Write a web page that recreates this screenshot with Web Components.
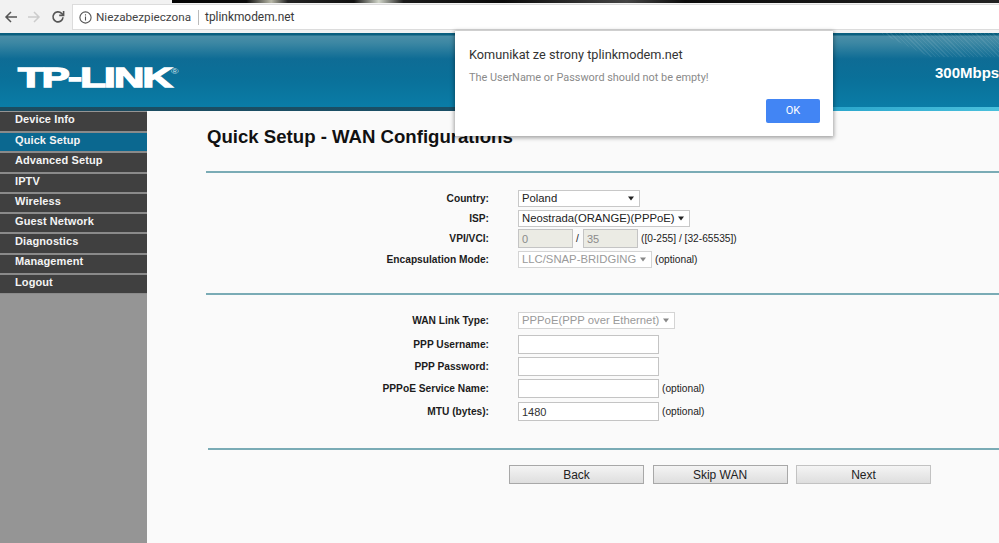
<!DOCTYPE html>
<html lang="pl"><head><meta charset="utf-8"><title>TP-LINK</title>
<style>
html,body{margin:0;padding:0;width:999px;height:543px;overflow:hidden;background:#fafafa;font-family:"Liberation Sans",Arial,sans-serif}
body{display:flex;flex-direction:column;position:relative}
router-page{flex:1;min-height:0}
</style></head><body>
<browser-bar url="tplinkmodem.net" status="Niezabezpieczona"></browser-bar>
<router-banner speed="300Mbps"></router-banner>
<router-page>
  <side-menu slot="menu">
    <menu-item>Device Info</menu-item>
    <menu-item active>Quick Setup</menu-item>
    <menu-item>Advanced Setup</menu-item>
    <menu-item>IPTV</menu-item>
    <menu-item>Wireless</menu-item>
    <menu-item>Guest Network</menu-item>
    <menu-item>Diagnostics</menu-item>
    <menu-item>Management</menu-item>
    <menu-item>Logout</menu-item>
  </side-menu>
  <wan-title>Quick Setup - WAN Configurations</wan-title>
  <section-rule style="margin-top:24px"></section-rule>
  <form-section style="margin-top:15px">
    <form-row label="Country:" h="20"><select-box w="122">Poland</select-box></form-row>
    <form-row label="ISP:" h="20"><select-box w="172">Neostrada(ORANGE)(PPPoE)</select-box></form-row>
    <form-row label="VPI/VCI:" h="21"><text-box w="55" h="19" disabled>0</text-box><span style="margin:0 5px 0 3px;width:2px">/</span><text-box w="55" h="19" disabled>35</text-box><span style="margin-left:3px">([0-255] / [32-65535])</span></form-row>
    <form-row label="Encapsulation Mode:" h="20"><select-box w="134" disabled>LLC/SNAP-BRIDGING</select-box><span style="margin-left:3px">(optional)</span></form-row>
  </form-section>
  <section-rule style="margin-top:24px"></section-rule>
  <form-section style="margin-top:13px">
    <form-row label="WAN Link Type:" h="24"><select-box w="157" disabled>PPPoE(PPP over Ethernet)</select-box></form-row>
    <form-row label="PPP Username:" h="25"><text-box w="141" h="19"></text-box></form-row>
    <form-row label="PPP Password:" h="19"><text-box w="141" h="19"></text-box></form-row>
    <form-row label="PPPoE Service Name:" h="25"><text-box w="141" h="19"></text-box><span style="margin-left:3px">(optional)</span></form-row>
    <form-row label="MTU (bytes):" h="21"><text-box w="141" h="19">1480</text-box><span style="margin-left:3px">(optional)</span></form-row>
  </form-section>
  <section-rule style="margin-top:26px;margin-left:2px"></section-rule>
  <button-row>
    <push-button>Back</push-button>
    <push-button>Skip WAN</push-button>
    <push-button focused>Next</push-button>
  </button-row>
</router-page>
<alert-dialog heading="Komunikat ze strony tplinkmodem.net" ok="OK">The UserName or Password should not be empty!</alert-dialog>
<script>
function def(name, html){
  customElements.define(name, class extends HTMLElement{
    constructor(){super();this.attachShadow({mode:'open'});}
    connectedCallback(){
      this.shadowRoot.innerHTML = typeof html==='function'?html(this):html;
    }
  });
}
def('browser-bar', el=>`<style>
:host{display:block;height:33px;background:#f2f2f2;box-sizing:border-box;position:relative;font-family:Roboto,"Open Sans",sans-serif}
.strip{height:3px;margin-left:172px;background:linear-gradient(90deg,#050505 0,#0a0a0a 9%,#b8b8a8 12%,#222 14%,#111 22%,#d0d4c8 25%,#1a1a1a 28%,#0a0a0a 40%,#444 55%,#0c0c0c 62%,#222 100%)}
.row{display:flex;align-items:center;height:24px;margin:2px 0 0 -1px}
svg{display:block;flex:none}
.nav{width:23.5px;height:24px;display:flex;align-items:center;justify-content:center}
.addr{flex:1;margin-left:3.5px;height:24px;background:#fff;box-shadow:0 0 0 1px #dcdcdc;display:flex;align-items:center;padding-left:6px;font-size:11.7px;color:#444;white-space:nowrap}
.sep{width:1px;height:15px;background:#bbb;margin:0 6px 0 7px}
.url{color:#3a3a3a;font-size:11.9px}
.st{margin-left:4px}
</style>
<div class="strip"></div>
<div class="row">
<span class="nav"><svg width="16" height="16" viewBox="0 0 16 16" fill="none" stroke="#555" stroke-width="1.5"><path d="M14 8H3M8 3L3 8l5 5"/></svg></span>
<span class="nav"><svg width="16" height="16" viewBox="0 0 16 16" fill="none" stroke="#ccc" stroke-width="1.5"><path d="M2 8h11M8 3l5 5-5 5"/></svg></span>
<span class="nav"><svg width="16" height="16" viewBox="0 0 16 16" fill="none" stroke="#555" stroke-width="1.6"><path d="M13 8.2A5 5 0 1 1 11.6 4.4L13.4 6"/><path d="M13.6 2v4.4H9.2" fill="none"/></svg></span>
<div class="addr"><svg width="13" height="13" viewBox="0 0 13 13" fill="none" stroke="#555" stroke-width="1.1"><circle cx="6.5" cy="6.5" r="5.6"/><path d="M6.5 5.6v4M6.5 3.2v1.2"/></svg>
<span class="st">${el.getAttribute('status')}</span><span class="sep"></span><span class="url">${el.getAttribute('url')}</span></div>
</div>`);
def('router-banner', el=>`<style>
:host{display:block;height:78px;position:relative;overflow:hidden;background:linear-gradient(180deg,#0a5f7f 0,#0a5f7f 2px,#4a8ea8 3px,#3c87a3 10px,#0e6c95 26px,#0a7099 45px,#0a7ca6 73px);box-sizing:border-box}
.hatch{position:absolute;inset:0 0 auto 880px;height:24px;background:repeating-linear-gradient(45deg,rgba(255,255,255,.08) 0 1px,transparent 1px 3px);clip-path:polygon(0 0,100% 0,100% 100%,50px 100%)}
.band{position:absolute;left:0;right:0;bottom:0;height:4px;background:linear-gradient(90deg,#1c4c60 0,#1a4f66 45%,#2aa6cc 83%,#4ac0dc 100%)}
.row{position:absolute;inset:0 0 4px 0;display:flex;align-items:center;padding:15px 0 0 18px;box-sizing:border-box}
.logo{font:bold 28.5px "Liberation Sans",Arial,sans-serif;color:#fff;-webkit-text-stroke:1.4px #fff;transform:scaleX(1.47);transform-origin:left center;letter-spacing:-1.2px;white-space:nowrap;line-height:1}
.logo sup{font:normal 7px "Liberation Sans",sans-serif;-webkit-text-stroke:0;vertical-align:13px;color:#cfe3ea;letter-spacing:0}
.speed{position:absolute;left:935px;top:31px;font:bold 15px "Liberation Sans",Arial,sans-serif;color:#fff;white-space:nowrap}
</style><div class="hatch"></div><div class="band"></div><div class="row"><span class="logo">TP-LINK<sup>®</sup></span></div><span class="speed">${el.getAttribute('speed')}</span>`);
def('router-page', `<style>
:host{display:grid;grid-template-columns:147px 1fr;height:100%;background:#fafafa}
.side{background:#959595;padding-top:1px;min-height:0}
.main{min-width:0;padding-left:59px;display:block;box-sizing:border-box}
</style><div class="side"><slot name="menu"></slot></div><div class="main"><slot></slot></div>`);
def('side-menu', `<style>:host{display:grid;grid-template-rows:repeat(9,1fr);height:182px}</style><slot></slot>`);
def('menu-item', el=>`<style>
:host{display:flex;align-items:center;padding:0 0 4.5px 15px;background:${el.hasAttribute('active')?'#0b6890':'#404040'};color:#f4f4f4;font:bold 11px "Liberation Sans",Arial,sans-serif;letter-spacing:.1px;box-sizing:border-box;border-top:1px solid #8a8a8a;border-bottom:1px solid #8a8a8a;white-space:nowrap}
:host(:first-child){border-top:0}
</style><slot></slot>`);
def('wan-title', `<style>:host{display:block;padding:15px 0 0 1px;font:bold 18.6px/21px "Liberation Sans",Arial,sans-serif;color:#111;white-space:nowrap}</style><slot></slot>`);
def('section-rule', `<style>:host{display:block;height:2px;background:#7aabb5}</style>`);
def('form-section', `<style>:host{display:block}</style><slot></slot>`);
def('form-row', el=>`<style>
:host{display:grid;grid-template-columns:283px 1fr;column-gap:29px;height:${el.getAttribute('h')}px;align-items:center;font:10.2px "Liberation Sans",Arial,sans-serif;color:#222}
.l{font-weight:bold;text-align:right;color:#1c1c1c;white-space:nowrap}
.f{display:flex;align-items:center;white-space:nowrap}
</style><div class="l">${el.getAttribute('label')}</div><div class="f"><slot></slot></div>`);
def('select-box', el=>{const d=el.hasAttribute('disabled');return `<style>
:host{display:inline-flex;align-items:center;justify-content:space-between;width:${el.getAttribute('w')}px;height:17px;box-sizing:border-box;border:1px solid ${d?'#d4d4d4':'#c8c8c8'};background:#fff;padding:0 5px 0 3px;font:11.3px "Liberation Sans",Arial,sans-serif;color:${d?'#9a9a9a':'#222'};white-space:nowrap}
svg{flex:none;display:block}
</style><slot></slot><svg width="6" height="5" viewBox="0 0 6 5"><path d="M0 .5h6L3 4.5z" fill="${d?'#888':'#222'}"/></svg>`});
def('text-box', el=>{const d=el.hasAttribute('disabled');return `<style>
:host{display:inline-flex;align-items:center;width:${el.getAttribute('w')}px;height:${el.getAttribute('h')}px;box-sizing:border-box;border:1px solid #c4c4c4;background:${d?'#ebebe4':'#fff'};padding:0 3px;font:11px "Liberation Sans",Arial,sans-serif;color:${d?'#8a8a8a':'#333'};flex:none}
</style><slot></slot>`});
def('button-row', `<style>:host{display:flex;padding:15px 0 0 303px;gap:8.5px}</style><slot></slot>`);
def('push-button', el=>`<style>
:host{display:flex;align-items:center;justify-content:center;width:135px;height:19px;box-sizing:border-box;border:${el.hasAttribute('focused')?'1px solid #c2c2c2':'1px solid #a8a8a8'};background:linear-gradient(180deg,#f4f4f4,#dedede);font:12px "Liberation Sans",Arial,sans-serif;color:#222}
</style><slot></slot>`);
def('alert-dialog', el=>`<style>
:host{position:absolute;left:455px;top:31px;width:378px;height:105px;box-sizing:border-box;background:#fff;box-shadow:0 1px 4px 1px rgba(0,0,0,.35);padding:15px 13px 0 14px;font-family:Roboto,"Open Sans",sans-serif;display:flex;flex-direction:column}
.h{font-size:12.7px;line-height:17px;color:#333;white-space:nowrap}
.m{font-size:10.9px;line-height:15px;color:#8a8a8a;margin-top:7px;white-space:nowrap}
.a{margin-top:auto;padding-bottom:13px;display:flex;justify-content:flex-end}
button{all:unset;width:54px;height:24px;background:#4285f4;border-radius:2px;color:#fff;font-size:11px;text-align:center;line-height:24px}
</style><div class="h">${el.getAttribute('heading')}</div><div class="m"><slot></slot></div><div class="a"><button>${el.getAttribute('ok')}</button></div>`);
</script>
</body></html>
